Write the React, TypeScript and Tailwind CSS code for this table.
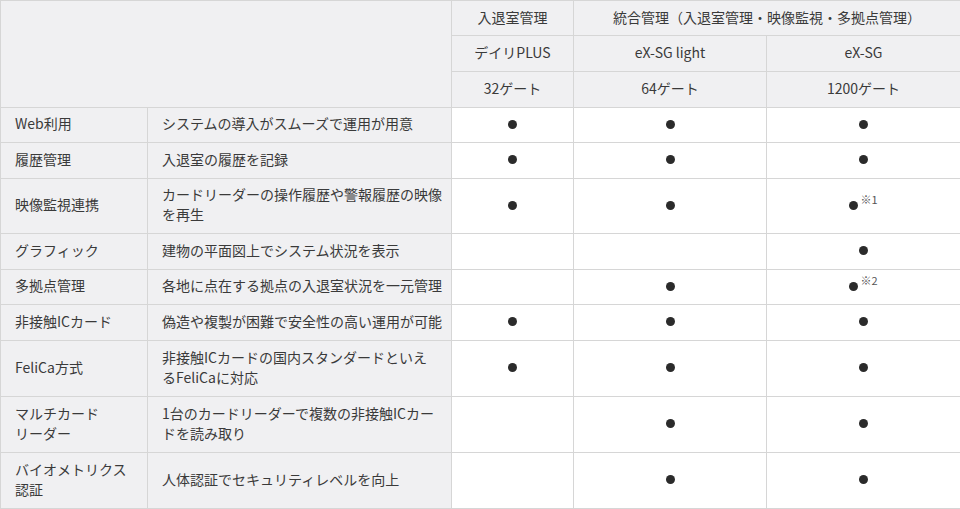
import React from "react";

type Row = {
  name: React.ReactNode;
  desc: React.ReactNode;
  a: boolean;
  b: boolean;
  c: boolean;
  note?: string;
  h: number;
};

const Dot = ({ note }: { note?: string }) => (
  <div className="flex justify-center items-center -mt-[2px]">
    <span className="block w-[9px] h-[9px] rounded-full bg-[#2b2b2b]" />
    {note ? (
      <span className="relative -top-[6px] text-[11px] leading-[11px] ml-[2px] text-[#555]">{note}</span>
    ) : null}
  </div>
);

const rows: Row[] = [
  { name: "Web利用", desc: "システムの導入がスムーズで運用が用意", a: true, b: true, c: true, h: 35 },
  { name: "履歴管理", desc: "入退室の履歴を記録", a: true, b: true, c: true, h: 36 },
  {
    name: "映像監視連携",
    desc: (
      <>
        カードリーダーの操作履歴や警報履歴の映像
        <br />
        を再生
      </>
    ),
    a: true,
    b: true,
    c: true,
    note: "※1",
    h: 55,
  },
  { name: "グラフィック", desc: "建物の平面図上でシステム状況を表示", a: false, b: false, c: true, h: 36 },
  { name: "多拠点管理", desc: "各地に点在する拠点の入退室状況を一元管理", a: false, b: true, c: true, note: "※2", h: 35 },
  { name: "非接触ICカード", desc: "偽造や複製が困難で安全性の高い運用が可能", a: true, b: true, c: true, h: 36 },
  {
    name: "FeliCa方式",
    desc: (
      <>
        非接触ICカードの国内スタンダードといえ
        <br />
        るFeliCaに対応
      </>
    ),
    a: true,
    b: true,
    c: true,
    h: 56,
  },
  {
    name: (
      <>
        マルチカード
        <br />
        リーダー
      </>
    ),
    desc: (
      <>
        1台のカードリーダーで複数の非接触ICカー
        <br />
        ドを読み取り
      </>
    ),
    a: false,
    b: true,
    c: true,
    h: 56,
  },
  {
    name: (
      <>
        バイオメトリクス
        <br />
        認証
      </>
    ),
    desc: "人体認証でセキュリティレベルを向上",
    a: false,
    b: true,
    c: true,
    h: 56,
  },
];

const bd = "border border-[#d6d6d6]";

export default function App() {
  return (
    <div
      className="w-[960px] h-[509px] bg-white text-[#3a3a3a] text-[14px] leading-[20px]"
      style={{ fontFamily: '"Noto Sans CJK JP", "Noto Sans", sans-serif' }}
    >
      <table className="border-collapse table-fixed w-[960px]">
        <colgroup>
          <col className="w-[147px]" />
          <col className="w-[304px]" />
          <col className="w-[122px]" />
          <col className="w-[193px]" />
          <col className="w-[194px]" />
        </colgroup>
        <tbody>
          <tr className="h-[35px]">
            <td colSpan={2} rowSpan={3} className={`${bd} bg-[#f0f0f2]`} />
            <td className={`${bd} bg-[#f0f0f2] text-center p-0 pb-[3px]`}>入退室管理</td>
            <td colSpan={2} className={`${bd} bg-[#f0f0f2] text-center p-0 pb-[3px]`}>
              統合管理（入退室管理・映像監視・多拠点管理）
            </td>
          </tr>
          <tr className="h-[36px]">
            <td className={`${bd} bg-[#f0f0f2] text-center p-0 pb-[3px]`}>デイリPLUS</td>
            <td className={`${bd} bg-[#f0f0f2] text-center p-0 pb-[3px]`}>eX-SG light</td>
            <td className={`${bd} bg-[#f0f0f2] text-center p-0 pb-[3px]`}>eX-SG</td>
          </tr>
          <tr className="h-[36px]">
            <td className={`${bd} bg-[#f0f0f2] text-center p-0 pb-[3px]`}>32ゲート</td>
            <td className={`${bd} bg-[#f0f0f2] text-center p-0 pb-[3px]`}>64ゲート</td>
            <td className={`${bd} bg-[#f0f0f2] text-center p-0 pb-[3px]`}>1200ゲート</td>
          </tr>
          {rows.map((r, i) => (
            <tr key={i} style={{ height: r.h }}>
              <td className={`${bd} bg-[#f0f0f2] pl-[14px] pr-0 py-0 pb-[4px] whitespace-nowrap`}>{r.name}</td>
              <td className={`${bd} bg-[#f0f0f2] pl-[14px] pr-0 py-0 pb-[4px] whitespace-nowrap`}>{r.desc}</td>
              <td className={`${bd} p-0`}>{r.a ? <Dot /> : null}</td>
              <td className={`${bd} p-0`}>{r.b ? <Dot /> : null}</td>
              <td className={`${bd} p-0`}>{r.c ? <Dot note={r.note} /> : null}</td>
            </tr>
          ))}
        </tbody>
      </table>
    </div>
  );
}
